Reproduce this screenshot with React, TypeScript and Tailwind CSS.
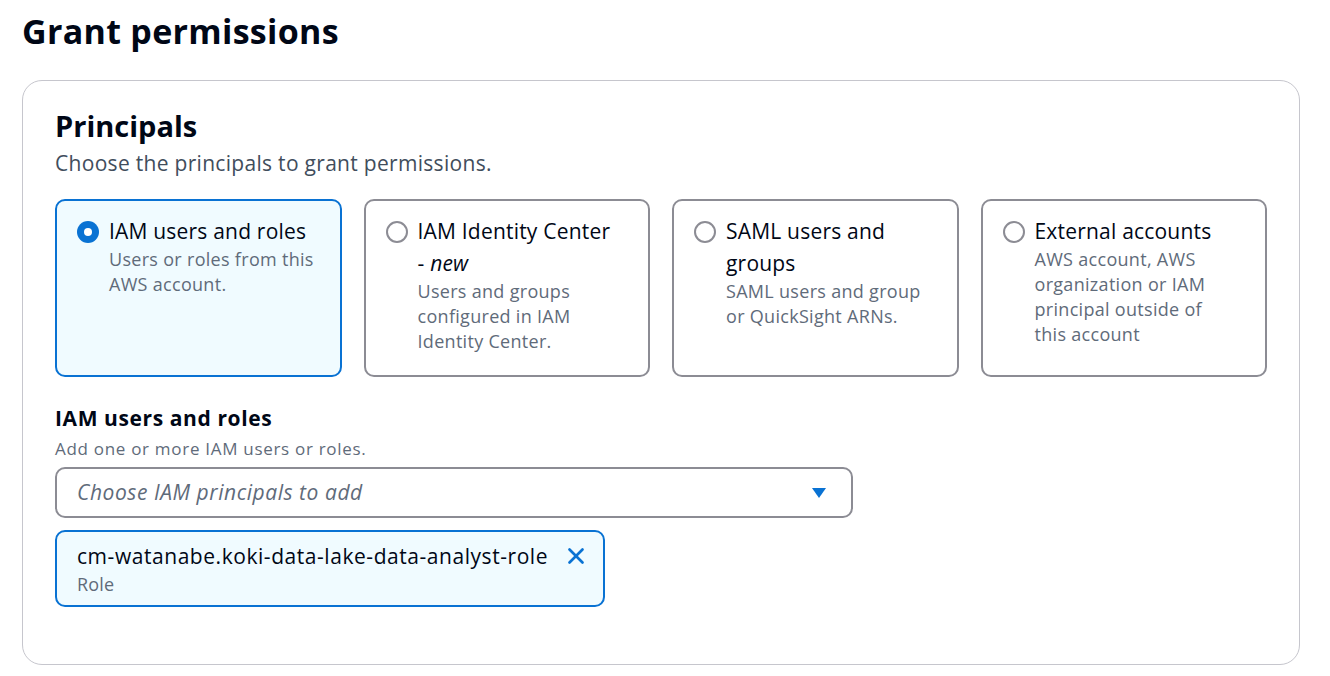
import { X } from 'lucide-react';

const options = [
  {
    key: 'iam',
    title: 'IAM users and roles',
    desc: ['Users or roles from this', 'AWS account.'],
    selected: true,
  },
  {
    key: 'idc',
    title: 'IAM Identity Center',
    suffix: true,
    desc: ['Users and groups', 'configured in IAM', 'Identity Center.'],
  },
  {
    key: 'saml',
    title: 'SAML users and groups',
    desc: ['SAML users and group', 'or QuickSight ARNs.'],
  },
  {
    key: 'ext',
    title: 'External accounts',
    desc: ['AWS account, AWS', 'organization or IAM', 'principal outside of', 'this account'],
  },
];

function Radio({ checked }: { checked?: boolean }) {
  if (checked) {
    return (
      <span className="mt-[6px] flex h-[22px] w-[22px] shrink-0 items-center justify-center rounded-full bg-[#0972d3]">
        <span className="h-[8px] w-[8px] rounded-full bg-white" />
      </span>
    );
  }
  return <span className="mt-[6px] block h-[22px] w-[22px] shrink-0 rounded-full border-2 border-[#8c8c94] bg-white" />;
}

export default function App() {
  return (
    <div className="min-h-screen bg-white px-[22px] pt-[8px] text-[#000716]" style={{ fontFamily: '"Open Sans", "Liberation Sans", sans-serif' }}>
      <h1 className="text-[34px] font-bold leading-[46px] tracking-[0.3px]">Grant permissions</h1>

      <div className="mt-[26px] w-[1278px] rounded-[20px] border border-[#c6c6cd] px-[32px] pb-[57px] pt-[25px]">
        <h2 className="text-[29px] font-bold leading-[40px]">Principals</h2>
        <p className="mt-[2px] text-[21px] leading-[30px] tracking-[0.3px] text-[#414d5c]">Choose the principals to grant permissions.</p>

        <div className="mt-[21px] grid grid-cols-4 gap-[22px]">
          {options.map((o) => (
            <div
              key={o.key}
              className={
                o.selected
                  ? 'flex h-[178px] gap-[10px] rounded-[10px] border-2 border-[#0972d3] bg-[#f0fbff] pl-[20px] pr-[12px] pt-[14px]'
                  : 'flex h-[178px] gap-[10px] rounded-[10px] border-2 border-[#8c8c94] bg-white pl-[20px] pr-[12px] pt-[14px]'
              }
            >
              <Radio checked={o.selected} />
              <div>
                <div className="text-[21px] leading-[32px] tracking-[0.2px]">
                  {o.title}
                  {o.suffix && (
                    <>
                      <br />- <i>new</i>
                    </>
                  )}
                </div>
                <div className="text-[18px] leading-[25px] tracking-[0.3px] text-[#5f6b7a]">
                  {o.desc.map((line) => (
                    <div key={line}>{line}</div>
                  ))}
                </div>
              </div>
            </div>
          ))}
        </div>

        <div className="mt-[26px] text-[21px] font-bold leading-[30px] tracking-[0.6px]">IAM users and roles</div>
        <div className="mt-[3px] text-[17px] leading-[26px] tracking-[0.7px] text-[#5f6b7a]">Add one or more IAM users or roles.</div>

        <div className="mt-[5px] flex h-[51px] w-[798px] items-center justify-between rounded-[10px] border-2 border-[#8c8c94] bg-white pl-[20px] pr-[24px]">
          <span className="text-[21px] italic tracking-[0.55px] text-[#5f6b7a]">Choose IAM principals to add</span>
          <svg width="16" height="12" viewBox="0 0 16 12">
            <path d="M1 1 H15 L8 11 Z" fill="#0972d3" />
          </svg>
        </div>

        <div className="mt-[12px] flex w-[550px] items-start justify-between rounded-[10px] border-2 border-[#0972d3] bg-[#f0fbff] pb-[8px] pl-[20px] pr-[14px] pt-[9px]">
          <div>
            <div className="text-[21px] leading-[30px] tracking-[0.55px]">cm-watanabe.koki-data-lake-data-analyst-role</div>
            <div className="text-[18px] leading-[26px] tracking-[0.2px] text-[#5f6b7a]">Role</div>
          </div>
          <X size={26} strokeWidth={2.5} className="mt-[2px] text-[#0972d3]" />
        </div>
      </div>
    </div>
  );
}
